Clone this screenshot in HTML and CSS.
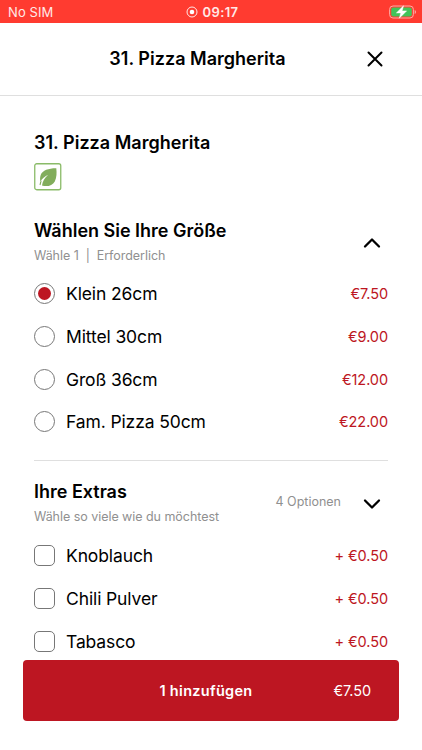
FILE: index.html
```html
<!DOCTYPE html>
<html lang="de">
<head>
<meta charset="utf-8">
<meta name="viewport" content="width=device-width, initial-scale=1">
<title>31. Pizza Margherita</title>
<link rel="stylesheet" href="styles.css">
</head>
<body>
<div class="screen">
  <div class="status">
    <span class="carrier">No SIM</span>
    <span class="clock">
      <svg width="12" height="12" viewBox="0 0 12 12"><circle cx="6" cy="6" r="5" fill="none" stroke="#ffe9e7" stroke-width="1"/><circle cx="6" cy="6" r="2.3" fill="#fff"/></svg>
      <span class="time">09:17</span>
    </span>
    <svg class="battery" width="28" height="16" viewBox="0 0 28 16"><rect x=".6" y="2" width="23.8" height="12" rx="3.4" fill="none" stroke="#ffaaa4" stroke-width="1"/><rect x="2.2" y="3.6" width="20.6" height="8.8" rx="2" fill="#43c35a"/><path d="M25.7 6v4q1.3-.5 1.3-2t-1.3-2z" fill="#ffaaa4"/><path d="M14.5 1.8 7.4 8.9h4.4l-1.5 5.3 7.3-7.3h-4.5z" fill="#fff" stroke="#fff" stroke-width=".5"/></svg>
  </div>
  <header class="header">
    <h1 class="header-title">31. Pizza Margherita</h1>
    <svg class="close" width="16" height="16" viewBox="0 0 16 16"><path d="M1.5 1.5l13 13M14.5 1.5l-13 13" fill="none" stroke="#000" stroke-width="2" stroke-linecap="round"/></svg>
  </header>
  <main class="content">
    <h2 class="product">31. Pizza Margherita</h2>
    <svg class="veggie" width="28" height="28" viewBox="0 0 28 28"><rect x=".75" y=".75" width="26" height="26" rx="2" fill="#fff" stroke="#8abb68" stroke-width="1.3"/><path d="M22.3 5.3C15 5.2 8.500 7.200 6.700 12c-.8 2.300-.7 4.300-.4 6.500C8.500 15.500 11 13.200 14.200 11.800 10.500 15 8.600 18.500 8 22.600c5.200 1.300 10.500.2 12.800-4.200 2-4 2-8.500 1.500-13.100zM6.200 18.800l-.7 2.900 1 .5 1.200-4.600z" fill="#82ad5c"/></svg>
    <section class="group sizes">
      <div class="group-head">
        <div><h3 class="group-title">Wählen Sie Ihre Größe</h3><p class="hint">Wähle 1 &nbsp;|&nbsp; Erforderlich</p></div>
        <svg class="chevron" width="18" height="12" viewBox="0 0 18 12"><path d="M2 9.500 9 2.500l7 7" fill="none" stroke="#000" stroke-width="2.300" stroke-linecap="round" stroke-linejoin="round"/></svg>
      </div>
      <div class="option"><i class="radio checked"></i><span class="name">Klein 26cm</span><span class="price">€7.50</span></div>
      <div class="option"><i class="radio"></i><span class="name">Mittel 30cm</span><span class="price">€9.00</span></div>
      <div class="option"><i class="radio"></i><span class="name">Groß 36cm</span><span class="price">€12.00</span></div>
      <div class="option"><i class="radio"></i><span class="name">Fam. Pizza 50cm</span><span class="price">€22.00</span></div>
    </section>
    <section class="group extras">
      <div class="group-head">
        <div><h3 class="group-title">Ihre Extras</h3><p class="hint">Wähle so viele wie du möchtest</p></div>
        <span class="count">4 Optionen</span>
        <svg class="chevron" width="18" height="12" viewBox="0 0 18 12"><path d="M2 2.500l7 7 7-7" fill="none" stroke="#000" stroke-width="2.300" stroke-linecap="round" stroke-linejoin="round"/></svg>
      </div>
      <div class="option"><i class="checkbox"></i><span class="name">Knoblauch</span><span class="price">+ €0.50</span></div>
      <div class="option"><i class="checkbox"></i><span class="name">Chili Pulver</span><span class="price">+ €0.50</span></div>
      <div class="option"><i class="checkbox"></i><span class="name">Tabasco</span><span class="price">+ €0.50</span></div>
    </section>
  </main>
  <footer class="footer">
    <div class="add"><span></span><span class="add-label">1 hinzufügen</span><span class="add-price">€7.50</span></div>
  </footer>
</div>
</body>
</html>
```
FILE: styles.css
```css
* { box-sizing: border-box; }
body { margin: 0; background: #fff; color: #000; font-family: Inter, "Liberation Sans", sans-serif; }
h1, h2, h3, p { margin: 0; }
svg { display: block; flex: none; }
.screen { height: 750px; display: flex; flex-direction: column; overflow: hidden; }
.status { height: 23px; flex: none; background: #ff3b30; color: #fff; display: grid; grid-template-columns: 1fr auto 1fr; align-items: center; padding: 1px 5px 0 8px; }
.carrier { font-size: 13px; color: #ffe9e7; letter-spacing: .1px; }
.clock { display: flex; align-items: center; gap: 4px; }
.time { font-size: 13px; font-weight: 600; color: #ffe9e7; letter-spacing: .4px; }
.battery { justify-self: end; }
.header { height: 73px; flex: none; border-bottom: 1px solid #dfdfdf; display: grid; grid-template-columns: 1fr auto 1fr; align-items: center; padding: 0 39px 0 12px; }
.header-title, .product, .group-title { font-size: 18px; line-height: 24px; font-weight: 600; letter-spacing: .02px; }
.header-title { grid-column: 2; }
.close { justify-self: end; }
.content { flex: 1; min-height: 0; overflow: hidden; padding: 35px 34px 0; }
.veggie { margin: 8px 0 0 -.5px; }
.sizes { margin-top: 29px; height: 241px; border-bottom: 1px solid #dfdfdf; }
.extras { padding-top: 20px; }
.group-head { display: flex; align-items: center; height: 44px; margin-bottom: 8.300px; }
.extras .group-head { margin-bottom: 9.300px; }
.group-head > div { flex: 1; }
.group-title { letter-spacing: -.01px; }
.hint { margin-top: 4px; font-size: 12.500px; line-height: 18px; color: #909090; letter-spacing: -.04px; }
.count { font-size: 12.500px; color: #909090; margin: 0 22px 3px 0; }
.chevron { margin: 1px 7px 0 0; }
.option { display: flex; align-items: center; height: 42.700px; }
.radio, .checkbox { flex: none; width: 21px; height: 21px; border: 1px solid #777; }
.radio { border-radius: 50%; display: grid; place-items: center; }
.checked::after { content: ""; width: 13px; height: 13px; border-radius: 50%; background: #bd1622; }
.checkbox { border-radius: 5px; }
.name { flex: 1; margin-left: 11px; font-size: 17.500px; letter-spacing: -.12px; }
.price { font-size: 14.500px; color: #bd1622; letter-spacing: -.08px; }
.footer { flex: none; height: 90px; padding: 0 23px; }
.add { height: 61px; background: #bd1622; color: #fff; border-radius: 4px; display: grid; grid-template-columns: 1fr auto 1fr; align-items: center; padding: 0 28px 0 18px; }
.add-label { font-size: 14.500px; font-weight: 600; letter-spacing: .3px; }
.add-price { justify-self: end; font-size: 14.500px; letter-spacing: -.08px; }
```
